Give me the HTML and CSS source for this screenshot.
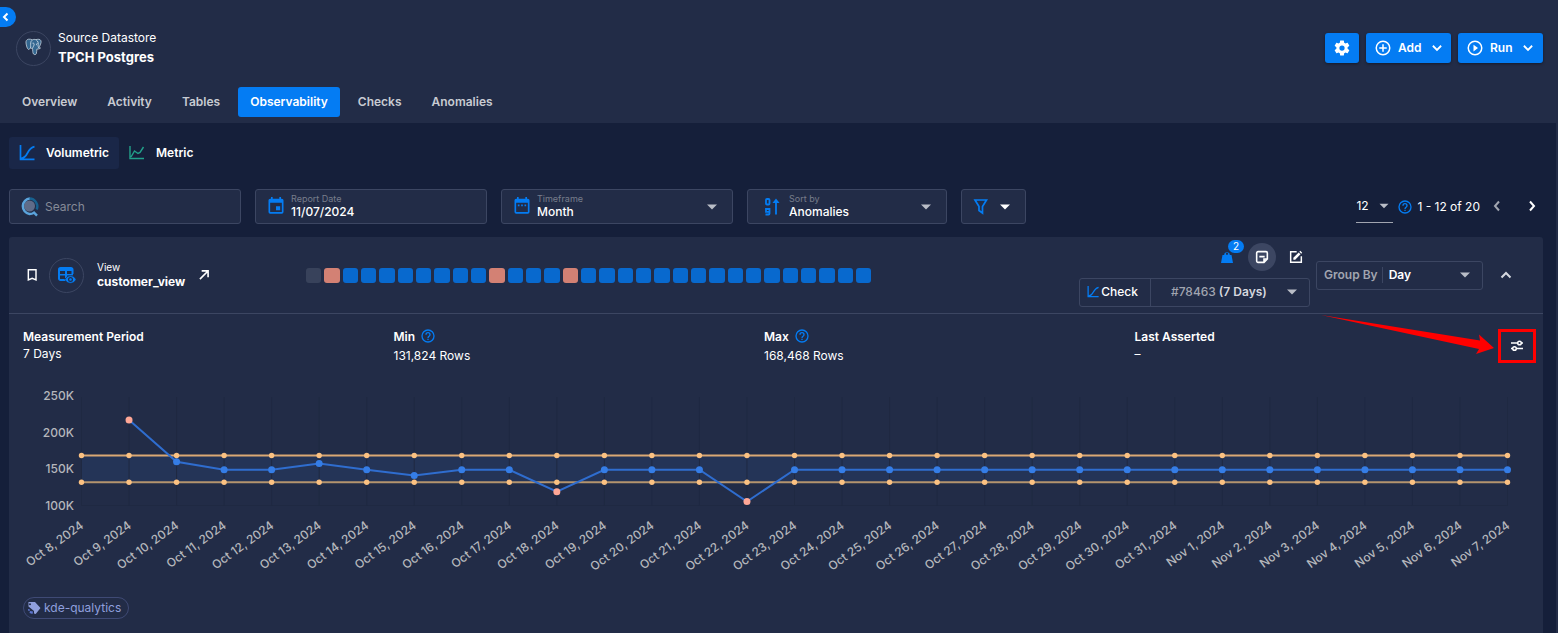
FILE: index.html
```html
<!DOCTYPE html>
<html lang="en">
<head>
<meta charset="utf-8">
<meta name="viewport" content="width=device-width, initial-scale=1">
<title>TPCH Postgres – Observability</title>
<link rel="stylesheet" href="styles.css">
</head>
<body>
<svg class="sprite" aria-hidden="true">
  <symbol id="i-caret" viewBox="0 0 24 24"><path fill="currentColor" d="M6 9l6 6 6-6z"/></symbol>
  <symbol id="i-down" viewBox="0 0 24 24"><path fill="none" stroke="currentColor" stroke-width="2.400" d="M6.500 9l5.500 5.500L17.500 9"/></symbol>
  <symbol id="i-help" viewBox="0 0 24 24"><path fill="currentColor" d="M11 18h2v-2h-2v2zm1-16a10 10 0 100 20 10 10 0 000-20zm0 18a8 8 0 110-16 8 8 0 010 16zm0-14a4 4 0 00-4 4h2a2 2 0 114 0c0 2-3 1.750-3 5h2c0-2.250 3-2.500 3-5a4 4 0 00-4-4z"/></symbol>
  <symbol id="i-curve" viewBox="0 0 16 16"><path fill="none" stroke="currentColor" stroke-width="1.700" d="M1.500 0v14.300H15.500M2 13.500c3-.3 5-2.500 6.500-5.500S12 2.500 15.500 1.700"/></symbol>
</svg>

<header class="top">
  <button class="collapse" aria-label="Collapse sidebar"><svg width="12" height="14" viewBox="0 0 12 14"><path fill="none" stroke="#fff" stroke-width="2" d="M7.500 3.500L4 7l3.500 3.500"/></svg></button>
  <div class="title-row">
    <div class="source">
      <span class="ring">
        <svg width="18" height="20" viewBox="0 0 18 20"><path fill="#336791" stroke="#c4d0dc" stroke-width=".8" d="M3.500 1.200C1.500 1.500.8 3 1 5c.3 2.500 1.200 6 2.400 6.400.9.3 1.600-.9 2.100-1.400.4.600 1.300.7 2 .5.300 1.500 0 4.200 1 5.500.8.900 2.300.8 2.800-.2.500-1.300.3-3.600.6-4.800 1.200.2 3-.2 3.600-1-.6.100-1.300.1-1.700-.1C15 7.800 16.600 4.500 16 2.800c-.7-1.900-3.500-1.700-5-1.100-1.400-.5-2.700-.4-3.700.1-1.100-.5-2.500-.8-3.800-.6z"/><path fill="none" stroke="#dbe5ee" stroke-width=".8" d="M7 2.300C5.300 3.500 5.800 6 5.600 7.500c0 1 .3 1.800 0 2.500M11.200 1.900c1.800 1.200 2.400 3.300 2 4.700-.3 1.300 0 2.200.6 3.200M7.500 5.200c1.300-.4 1.900.5 1.500 1.900-.3 1.200-.9 1.600-1.500 3.200M12.600 5.500c-1.100 0-1.400.6-.9 1.700"/></svg>
      </span>
      <div class="source-text"><span>Source Datastore</span><strong>TPCH Postgres</strong></div>
    </div>
    <div class="actions">
      <button class="btn btn-icon" aria-label="Settings"><svg width="18" height="18" viewBox="0 0 24 24"><path fill="#fff" d="M12 15.500A3.500 3.500 0 018.500 12 3.500 3.500 0 0112 8.500a3.500 3.500 0 013.500 3.500 3.500 3.500 0 01-3.500 3.500m7.430-2.530c.04-.32.070-.64.070-.97s-.03-.66-.07-1l2.110-1.630c.19-.15.240-.42.120-.64l-2-3.460c-.12-.22-.39-.31-.61-.22l-2.490 1c-.52-.39-1.060-.73-1.690-.98l-.37-2.650A.506.506 0 0014 2h-4c-.25 0-.46.180-.5.420l-.37 2.650c-.63.250-1.170.59-1.690.98l-2.490-1c-.22-.09-.49 0-.61.220l-2 3.460c-.13.220-.07.490.12.640L4.570 11c-.04.340-.07.670-.07 1s.03.650.070.970l-2.110 1.660c-.19.150-.25.420-.12.640l2 3.460c.12.220.390.300.610.220l2.490-1.010c.52.400 1.060.740 1.690.990l.37 2.650c.04.240.250.420.500.420h4c.25 0 .46-.18.500-.42l.37-2.650c.63-.26 1.170-.59 1.690-.99l2.490 1.010c.22.080.490 0 .61-.22l2-3.460c.12-.22.070-.49-.12-.64z"/></svg></button>
      <button class="btn"><svg width="18" height="18" viewBox="0 0 24 24" fill="none" stroke="#fff" stroke-width="2"><circle cx="12" cy="12" r="9"/><path d="M12 7v10M7 12h10"/></svg>Add<svg class="push" width="18" height="18"><use href="#i-down"/></svg></button>
      <button class="btn"><svg width="18" height="18" viewBox="0 0 24 24" fill="none" stroke="#fff" stroke-width="2"><circle cx="12" cy="12" r="9"/><path fill="#fff" stroke="none" d="M10 7.500v9l6-4.500z"/></svg>Run<svg class="push" width="18" height="18"><use href="#i-down"/></svg></button>
    </div>
  </div>
  <nav class="tabs">
    <a href="#">Overview</a><a href="#">Activity</a><a href="#">Tables</a><a href="#" class="active" aria-current="page">Observability</a><a href="#">Checks</a><a href="#">Anomalies</a>
  </nav>
</header>

<main class="page">
  <nav class="modes">
    <a href="#" class="mode active"><svg class="blue" width="16" height="16"><use href="#i-curve"/></svg>Volumetric</a>
    <a href="#" class="mode"><svg width="16" height="16" viewBox="0 0 16 16"><path fill="none" stroke="#22a08a" stroke-width="1.400" d="M1 1v12.500h14M2 12l3.500-6 3.500 2.500 2-1L14.500 2"/></svg>Metric</a>
  </nav>

  <div class="filters">
    <div class="field grow">
      <svg width="20" height="20" viewBox="0 0 20 20"><circle cx="9.500" cy="9" r="5.500" fill="#5f6c89"/><path fill="none" stroke="#5ba4dc" stroke-width="2.400" d="M10 1.500A7.800 7.800 0 009.500 17c2 0 3.400-.6 4.500-1.400l3 3"/><path fill="none" stroke="#17618f" stroke-width="2.400" d="M9.500 1.500a8 8 0 017.200 11"/></svg>
      <input type="search" placeholder="Search" aria-label="Search">
    </div>
    <div class="field grow">
      <svg class="blue" width="20" height="22" viewBox="0 0 24 26"><path fill="currentColor" d="M19 19H5V8h14m-3-7v2H8V1H6v2H5a2 2 0 00-2 2v14a2 2 0 002 2h14a2 2 0 002-2V5a2 2 0 00-2-2h-1V1m-1 11h-5v5h5v-5z"/></svg>
      <div class="stack"><label for="date">Report Date</label><input id="date" value="11/07/2024"></div>
    </div>
    <div class="field grow">
      <svg class="blue" width="20" height="22" viewBox="0 0 24 26"><path fill="currentColor" d="M19 3h-1V1h-2v2H8V1H6v2H5a2 2 0 00-2 2v14a2 2 0 002 2h14a2 2 0 002-2V5a2 2 0 00-2-2zm0 16H5V8h14v11zM7 10h2v2H7zm4 0h2v2h-2zm4 0h2v2h-2z"/></svg>
      <div class="stack"><label for="timeframe">Timeframe</label><select id="timeframe"><option>Month</option></select></div>
      <svg class="caret" width="20" height="20"><use href="#i-caret"/></svg>
    </div>
    <div class="field sort">
      <svg class="blue" width="20" height="20" viewBox="0 0 20 20" fill="none" stroke="currentColor" stroke-width="1.800"><rect x="4" y="2" width="3.500" height="5.500" rx="1"/><path d="M3.500 17.500H6.500a1 1 0 001-1V12H4v2.800h3.500M14 17.500V4"/><path fill="currentColor" stroke="none" d="M10.500 6L14 1.500 17.500 6z"/></svg>
      <div class="stack"><label for="sort">Sort by</label><select id="sort"><option>Anomalies</option></select></div>
      <svg class="caret" width="20" height="20"><use href="#i-caret"/></svg>
    </div>
    <button class="field funnel" aria-label="Filter"><svg class="blue" width="18" height="18" viewBox="0 0 18 18"><path fill="none" stroke="currentColor" stroke-width="1.700" d="M3 2h11.500l-4 6.500v6.500L7 12.500v-4z"/></svg><svg width="20" height="20"><use href="#i-caret"/></svg></button>
    <div class="pager">
      <div class="per-page"><select aria-label="Items per page"><option>12</option></select><svg class="caret" width="18" height="18"><use href="#i-caret"/></svg></div>
      <svg class="blue" width="16" height="16"><use href="#i-help"/></svg>
      <span>1 - 12 of 20</span>
      <button class="plain dim" aria-label="Previous page"><svg width="16" height="18" viewBox="0 0 16 18"><path fill="none" stroke="currentColor" stroke-width="2" d="M10 3.500L6 8l4 4.500"/></svg></button>
      <button class="plain" aria-label="Next page"><svg width="16" height="18" viewBox="0 0 16 18"><path fill="none" stroke="currentColor" stroke-width="2" d="M6 3.500L10 8l-4 4.500"/></svg></button>
    </div>
  </div>

  <section class="card">
    <div class="card-head">
      <div class="entity">
        <button class="plain" aria-label="Bookmark"><svg width="16" height="16" viewBox="0 0 24 24"><path fill="none" stroke="#fff" stroke-width="2.200" d="M6.500 4H18v15.500l-5.750-2.500L6.500 19.500z"/></svg></button>
        <span class="ring">
          <svg class="blue" width="20" height="18" viewBox="0 0 20 18"><path fill="none" stroke="currentColor" stroke-width="2" d="M9 14H3.500A1.500 1.500 0 012 12.500v-9A1.500 1.500 0 013.500 2H14a1.500 1.500 0 011.500 1.500V8"/><path fill="currentColor" d="M2 2h14v3H2zM2 8h14v1.500H2zM8 3h2v9H8z"/><path fill="currentColor" stroke="#222c47" stroke-width=".6" d="M8 13.500c1.200-2.500 3-3.700 5.500-3.700s4.300 1.200 5.500 3.700c-1.200 2.500-3 3.700-5.500 3.700S9.200 16 8 13.500z"/><circle cx="13.500" cy="13.500" r="1.900" fill="none" stroke="#222c47" stroke-width="1.200"/></svg>
        </span>
        <div class="entity-text"><span>View</span><strong>customer_view</strong></div>
        <a href="#" class="open" aria-label="Open view"><svg width="14" height="14" viewBox="0 0 24 24"><path fill="none" stroke="#fff" stroke-width="2.800" d="M5 19L18 6M8 5h11v11"/></svg></a>
      </div>
      <div class="days" id="days"></div>
      <div class="tools">
        <div class="check-tools">
          <div class="mini">
            <button class="plain weight" aria-label="Weight, 2"><svg class="blue" width="14" height="14" viewBox="0 0 14 14"><path fill="currentColor" d="M4.200 5A2.800 2.800 0 119.800 5H11.500l1.500 8H1L2.500 5z"/><circle cx="7" cy="3.800" r="1.100" fill="#222c47"/></svg><span class="badge">2</span></button>
            <button class="plain note" aria-label="Notes"><svg width="16" height="16" viewBox="0 0 24 24"><path fill="none" stroke="#fff" stroke-width="2.400" d="M15 20H6a2 2 0 01-2-2V6a2 2 0 012-2h12a2 2 0 012 2v9zM15 20v-5h5M8 11.500h8"/></svg></button>
            <button class="plain" aria-label="Edit"><svg width="16" height="16" viewBox="0 0 24 24"><path fill="none" stroke="#fff" stroke-width="2.200" d="M13 4H4v16h16v-9"/><path fill="#fff" d="M8 13.200V16h2.800l8-8L16 5.200zM17 4.200L19.800 7l1.500-1.500-2.800-2.800z"/></svg></button>
          </div>
          <div class="check-box">
            <button class="plain check"><svg class="blue" width="12" height="12"><use href="#i-curve"/></svg>Check</button>
            <label class="check-pick"><span>#78463</span><select aria-label="Check window"><option>(7 Days)</option></select><svg class="caret" width="20" height="20"><use href="#i-caret"/></svg></label>
          </div>
        </div>
        <label class="group"><span>Group By</span><select><option>Day</option></select><svg class="caret" width="20" height="20"><use href="#i-caret"/></svg></label>
        <button class="plain fold" aria-label="Collapse"><svg width="16" height="16" viewBox="0 0 16 16"><path fill="none" stroke="#d5d8df" stroke-width="2" d="M3.500 10.500L8 6l4.500 4.500"/></svg></button>
      </div>
    </div>

    <div class="stats">
      <dl><dt>Measurement Period</dt><dd>7 Days</dd></dl>
      <dl class="roomy"><dt>Min <svg class="blue" width="16" height="16"><use href="#i-help"/></svg></dt><dd>131,824 Rows</dd></dl>
      <dl class="roomy"><dt>Max <svg class="blue" width="16" height="16"><use href="#i-help"/></svg></dt><dd>168,468 Rows</dd></dl>
      <dl><dt>Last Asserted</dt><dd>–</dd></dl>
      <div class="callout">
        <svg class="arrow" width="174" height="44" viewBox="0 0 174 44" aria-hidden="true"><path fill="#fe0000" d="M0 0L159 25.500l-1-6L173 33l-18 6 3-5z"/></svg>
        <button class="plain tune" aria-label="Chart settings"><svg width="14" height="14" viewBox="0 0 14 14" fill="none" stroke="#fff" stroke-width="1.500"><path d="M1 4h6.500M11.500 4H13M1 9.500h1.500M6.500 9.500H13"/><circle cx="9.500" cy="4" r="1.800"/><circle cx="4.500" cy="9.500" r="1.800"/></svg></button>
      </div>
    </div>

    <svg class="chart" id="chart" role="img" aria-label="Daily row volume"></svg>
    <div class="tags">
      <a href="#" class="tag"><svg width="14" height="14" viewBox="0 0 14 14"><path fill="#8f9fdd" d="M1.500 1H8l5.500 6-4.800 6L7 12.500V10L1.500 5.500V2z"/><path fill="#5d75d0" d="M1 8l2 .5-.5 1.500L1 9.500zM3 10l3 .5-.5 2.500L2.500 12z"/><circle cx="3" cy="3.200" r="1" fill="#222c47"/></svg>kde-qualytics</a>
    </div>
  </section>
</main>
<script src="chart.js"></script>
</body>
</html>
```

FILE: styles.css
```css
* { box-sizing: border-box; }
body { margin: 0; min-height: 100vh; background: #151f3a; color: #fff; font: 12px/16px Inter, "Open Sans", sans-serif; border-right: 2px solid #222c47; }
button, input, select { font: inherit; color: inherit; border: 0; background: none; padding: 0; margin: 0; }
input, select { min-width: 0; outline: 0; }
select { appearance: none; }
button { cursor: pointer; }
a { color: inherit; text-decoration: none; }
svg { display: block; flex: none; }
strong { font-weight: 700; }
.sprite { display: none; }
.blue { color: #047cf3; }
.caret { color: #b9bdc7; pointer-events: none; }
.plain { display: flex; align-items: center; justify-content: center; }
.dim { color: #a1a5b0; }

.top { position: relative; background: #222c47; padding: 30px 13px 6px 16px; }
.collapse { position: absolute; left: 0; top: 7px; width: 16px; height: 20px; background: #047cf3; border-radius: 0 10px 10px 0; display: flex; align-items: center; justify-content: flex-start; }
.title-row { display: flex; justify-content: space-between; align-items: center; height: 36px; }
.source, .actions { display: flex; align-items: center; gap: 7px; }
.actions { gap: 7px; }
.ring { display: flex; align-items: center; justify-content: center; width: 35px; height: 35px; border: 1px solid #3c4662; border-radius: 50%; flex: none; }
.source-text { display: flex; flex-direction: column; gap: 3px; padding-bottom: 2px; }
.source-text strong { font-size: 13px; }
.btn { display: flex; align-items: center; gap: 6px; width: 85px; height: 30px; padding: 0 7px 0 8px; border-radius: 3px; background: #047cf3; font-weight: 600; box-shadow: 0 1px 3px #0006; }
.btn-icon { width: 34px; padding: 0; justify-content: center; }
.push { margin-left: auto; }
.tabs { display: flex; gap: 6px; margin: 21px 0 0 -6px; color: #c8cbd2; font-weight: 600; }
.tabs a { padding: 7px 12px; border-radius: 3px; }
.tabs .active { background: #047cf3; color: #fff; }

.page { padding: 14px 13px 0 9px; }
.modes { display: flex; }
.mode { display: flex; align-items: center; gap: 11px; height: 32px; padding: 0 10px; border-radius: 3px; font-weight: 600; }
.mode.active { background: #1a2748; }
.filters { display: flex; gap: 14px; margin-top: 20px; align-items: center; }
.field { display: flex; align-items: center; gap: 5px; height: 35px; padding: 0 10px; background: #222c47; border: 1px solid #3c4662; border-radius: 3px; }
.field.grow { flex: 0 1 232px; min-width: 0; }
.field input, .field select { width: 100%; }
.field input::placeholder { color: #858a97; opacity: 1; }
.sort { flex: 0 1 200px; min-width: 0; padding: 0 10px 0 14px; }
.sort .stack { padding-left: 2px; }
.stack { flex: 1; min-width: 0; display: flex; flex-direction: column; }
.stack label { font-size: 9px; line-height: 10px; color: #777d8b; }
.stack input, .stack select { height: 15px; line-height: 15px; font-weight: 500; }
.funnel { width: 65px; padding: 0 10px; }
.pager { display: flex; align-items: center; margin-left: auto; gap: 4px; }
.per-page { display: flex; align-items: center; justify-content: space-between; width: 37px; height: 32px; border-bottom: 1px solid #a1a5b0; }
.per-page select { width: 18px; }
.pager .plain { margin: 0 5px; }
.pager .plain:last-child { margin: 0 3px 0 10px; }

.card { margin-top: 13px; background: #222c47; border-radius: 3px 3px 0 0; min-height: 396px; }
.card-head { display: flex; height: 77px; border-bottom: 1px solid #3c4662; padding: 0 29px 0 15px; }
.entity { display: flex; align-items: center; width: 282px; flex: none; }
.entity .ring { margin: 0 13px 0 9px; }
.entity-text { display: flex; flex-direction: column; font-size: 12px; }
.entity-text span { font-size: 10px; line-height: 14px; }
.open { margin-left: 12px; }
.days { display: flex; align-items: center; gap: 3px; flex: 0 1 565px; }
.day { flex: 1; height: 15px; border-radius: 3px; background: #0869ce; }
.day.off { background: #38425b; }
.day.bad { background: #d38174; }
.tools { display: flex; margin-left: auto; align-items: center; }
.check-tools { width: 231px; }
.mini { display: flex; justify-content: flex-end; align-items: center; height: 42px; padding-right: 6px; }
.weight { position: relative; }
.badge { position: absolute; left: 8px; top: -10px; min-width: 16px; padding: 0 4px; border-radius: 7px; background: #047cf3; color: #fff; font-size: 10px; line-height: 13px; text-align: center; }
.note { width: 28px; height: 28px; margin: 0 12px 0 14px; border-radius: 50%; background: #3c4662; }
.check-box { display: flex; height: 29px; margin-bottom: 8px; border: 1px solid #3c4662; border-radius: 3px; }
.check { gap: 2px; width: 71px; padding-right: 5px; border-right: 1px solid #3c4662; font-weight: 500; }
.check-pick { display: flex; flex: 1; align-items: center; gap: 3px; padding: 0 7px 0 20px; color: #a1a5b0; font-weight: 500; }
.check-pick select { flex: 1; color: #d5d8df; font-weight: 600; }
.group { display: flex; align-items: center; width: 167px; height: 29px; margin-left: 6px; padding: 0 7px; border: 1px solid #3c4662; border-radius: 3px; color: #a1a5b0; font-weight: 600; }
.group select { flex: 1; margin-left: 4px; padding-left: 6px; border-left: 1px solid #3c4662; color: #fff; }
.fold { margin-left: 15px; }

.stats { display: grid; grid-template-columns: repeat(4, minmax(0, 1fr)); position: relative; padding: 15px 8px 0 14px; height: 64px; margin-right: 30px; }
.stats dl { margin: 0; }
.stats dt { display: flex; align-items: flex-start; gap: 5px; font-weight: 600; height: 16px; }
.stats dt svg { margin-top: -1px; }
.stats dd { margin: 1px 0 0; }
.stats .roomy dd { margin-top: 3px; }
.callout { position: absolute; right: -23px; top: 15px; }
.tune { width: 38px; height: 34px; border: 3px solid #fe0000; }
.arrow { position: absolute; right: 41px; top: -14px; }
.chart { width: 100%; height: 212px; }
.chart text { font-size: 12px; font-weight: 500; fill: #b5b7bc; }
.tags { padding: 7px 14px; display: flex; }
.tag { display: flex; align-items: center; gap: 3px; height: 22px; padding: 0 7px 0 3px; border: 1px solid #3f4a75; border-radius: 11px; color: #8f9fdd; }
```

FILE: chart.js
```js
const values = [null, 217, 160, 149, 149, 157.5, 149, 141, 149, 149, 119, 149, 149, 149, 105.5];
while (values.length < 31) values.push(149);
const anomalies = [1, 10, 14];

document.getElementById('days').innerHTML = values
  .map((v, i) => `<span class="day${v === null ? ' off' : anomalies.includes(i) ? ' bad' : ''}"></span>`)
  .join('');

function draw() {
  const chart = document.getElementById('chart');
  const left = 72.5;
  const right = chart.clientWidth - 35.5;
  const x = i => left + (right - left) * i / 30;
  const y = v => 127.5 - (v - 100) * 0.73;
  const hi = y(168.468);
  const lo = y(131.824);
  let out = `<rect x="${left}" y="${hi}" width="${right - left}" height="${lo - hi}" fill="#243457"/>`;
  [100, 150, 200, 250].forEach(v => {
    out += `<text x="65" y="${y(v) + 4}" text-anchor="end">${v}K</text>`;
  });
  out += `<path d="M${left} 127.5H${right}" stroke="#1f2942"/>`;
  for (let i = 0; i < 31; i++) {
    const name = i < 24 ? `Oct ${i + 8}` : `Nov ${i - 23}`;
    out += `<path d="M${x(i)} 19V128" stroke="#1f2942"/>`;
    out += `<text text-anchor="end" transform="translate(${x(i) + 3} 149) rotate(-36)">${name}, 2024</text>`;
  }
  out += `<path d="M${left} ${hi}H${right}" stroke="#daa874" stroke-width="2"/>`;
  out += `<path d="M${left} ${lo}H${right}" stroke="#b4946e" stroke-width="2"/>`;
  const line = values.map((v, i) => v === null ? '' : `${x(i)},${y(v)}`).join(' ');
  out += `<polyline points="${line}" fill="none" stroke="#2f6dcf" stroke-width="2"/>`;
  values.forEach((v, i) => {
    if (v !== null) out += `<circle cx="${x(i)}" cy="${y(v)}" r="3.5" fill="${anomalies.includes(i) ? '#ffa796' : '#357de6'}"/>`;
    out += `<circle cx="${x(i)}" cy="${hi}" r="2.7" fill="#fbc182"/><circle cx="${x(i)}" cy="${lo}" r="2.7" fill="#fbc182"/>`;
  });
  chart.innerHTML = out;
}
draw();
window.addEventListener('resize', draw);
```
